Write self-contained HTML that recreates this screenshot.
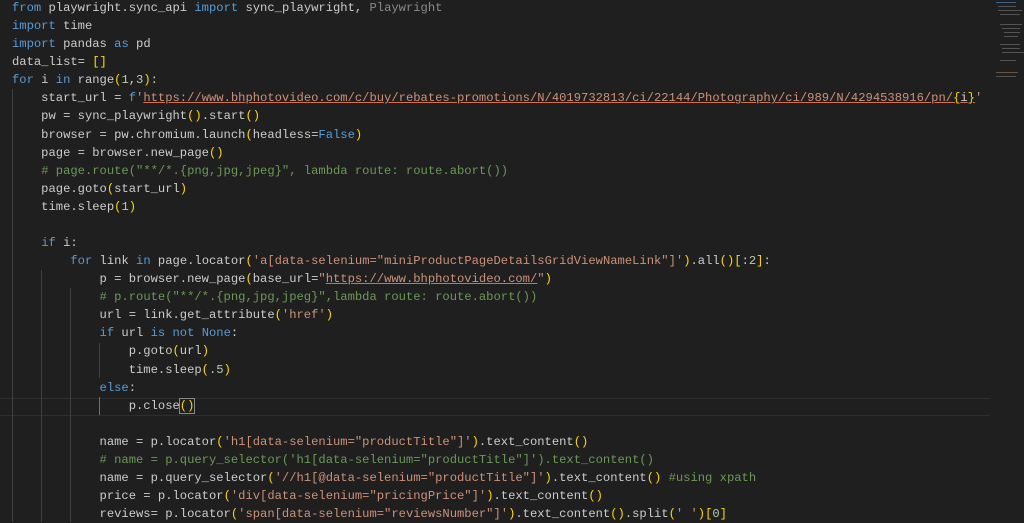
<!DOCTYPE html>
<html><head><meta charset="utf-8"><style>
html,body{margin:0;padding:0;background:#1f1f1f;width:1024px;height:522px;overflow:hidden}
#ed{position:absolute;left:12px;top:-1px;font-family:"Liberation Mono",monospace;font-size:12.17px;color:#cccccc}
.l{height:18.08px;line-height:18.08px;position:relative;white-space:pre}
.k{color:#569cd6}.c{color:#6a9955}.s{color:#ce9178}.n{color:#b5cea8}.y{color:#ffd700}.g{color:#8a8a8a}
.u{text-decoration:underline;text-decoration-color:#d4704e}
.g1{position:absolute;width:1px;background:#404040}
.cur{position:absolute;left:0;width:990px;height:16px;border-top:1px solid #2e2e2e;border-bottom:1px solid #2e2e2e}
.mm{position:absolute;background:#6a6a6a;height:1px;opacity:.7}
</style></head><body>
<div class="cur" style="top:398px"></div>
<div class="g1" style="left:12px;top:89px;height:433px"></div>
<div class="g1" style="left:41px;top:270px;height:252px"></div>
<div class="g1" style="left:70px;top:288px;height:234px"></div>
<div class="g1" style="left:99px;top:343px;height:35px"></div>
<div class="g1" style="left:99px;top:397px;height:18px;background:#707070"></div>
<div id="ed"><div class="l"><span class="k">from</span> playwright.sync_api <span class="k">import</span> sync_playwright, <span class="g">Playwright</span></div><div class="l"><span class="k">import</span> time</div><div class="l"><span class="k">import</span> pandas <span class="k">as</span> pd</div><div class="l">data_list= <span class="y">[]</span></div><div class="l"><span class="k">for</span> i <span class="k">in</span> range<span class="y">(</span><span class="n">1</span>,<span class="n">3</span><span class="y">)</span>:</div><div class="l">    start_url = <span class="k">f</span><span class="s">'<span class="u">https://www.bhphotovideo.com/c/buy/rebates-promotions/N/4019732813/ci/22144/Photography/ci/989/N/4294538916/pn/<span class="y">{</span><span style="color:#ccc">i</span><span class="y">}</span></span>'</span></div><div class="l">    pw = sync_playwright<span class="y">()</span>.start<span class="y">()</span></div><div class="l">    browser = pw.chromium.launch<span class="y">(</span>headless=<span class="k">False</span><span class="y">)</span></div><div class="l">    page = browser.new_page<span class="y">()</span></div><div class="l">    <span class="c"># page.route("**/*.{png,jpg,jpeg}", lambda route: route.abort())</span></div><div class="l">    page.goto<span class="y">(</span>start_url<span class="y">)</span></div><div class="l">    time.sleep<span class="y">(</span><span class="n">1</span><span class="y">)</span></div><div class="l"> </div><div class="l">    <span class="k">if</span> i:</div><div class="l">        <span class="k">for</span> link <span class="k">in</span> page.locator<span class="y">(</span><span class="s">'a[data-selenium="miniProductPageDetailsGridViewNameLink"]'</span><span class="y">)</span>.all<span class="y">()[</span>:<span class="n">2</span><span class="y">]</span>:</div><div class="l">            p = browser.new_page<span class="y">(</span>base_url=<span class="s">"<span class="u">https://www.bhphotovideo.com/</span>"</span><span class="y">)</span></div><div class="l">            <span class="c"># p.route("**/*.{png,jpg,jpeg}",lambda route: route.abort())</span></div><div class="l">            url = link.get_attribute<span class="y">(</span><span class="s">'href'</span><span class="y">)</span></div><div class="l">            <span class="k">if</span> url <span class="k">is</span> <span class="k">not</span> <span class="k">None</span>:</div><div class="l">                p.goto<span class="y">(</span>url<span class="y">)</span></div><div class="l">                time.sleep<span class="y">(</span><span class="n">.5</span><span class="y">)</span></div><div class="l">            <span class="k">else</span>:</div><div class="l">                p.close<span class="y" style="outline:1px solid #888">()</span></div><div class="l"> </div><div class="l">            name = p.locator<span class="y">(</span><span class="s">'h1[data-selenium="productTitle"]'</span><span class="y">)</span>.text_content<span class="y">()</span></div><div class="l">            <span class="c"># name = p.query_selector('h1[data-selenium="productTitle"]').text_content()</span></div><div class="l">            name = p.query_selector<span class="y">(</span><span class="s">'//h1[@data-selenium="productTitle"]'</span><span class="y">)</span>.text_content<span class="y">()</span> <span class="c">#using xpath</span></div><div class="l">            price = p.locator<span class="y">(</span><span class="s">'div[data-selenium="pricingPrice"]'</span><span class="y">)</span>.text_content<span class="y">()</span></div><div class="l">            reviews= p.locator<span class="y">(</span><span class="s">'span[data-selenium="reviewsNumber"]'</span><span class="y">)</span>.text_content<span class="y">()</span>.split<span class="y">(</span><span class="s">' '</span><span class="y">)[</span><span class="n">0</span><span class="y">]</span></div></div>
<div class="mm" style="left:996px;top:2px;width:20px;background:#4a7fb5"></div>
<div class="mm" style="left:998px;top:6px;width:18px"></div>
<div class="mm" style="left:998px;top:10px;width:24px"></div>
<div class="mm" style="left:1000px;top:14px;width:20px"></div>
<div class="mm" style="left:1000px;top:24px;width:22px"></div>
<div class="mm" style="left:1002px;top:28px;width:18px"></div>
<div class="mm" style="left:1004px;top:32px;width:16px"></div>
<div class="mm" style="left:1004px;top:36px;width:14px"></div>
<div class="mm" style="left:1000px;top:44px;width:20px"></div>
<div class="mm" style="left:1002px;top:48px;width:18px"></div>
<div class="mm" style="left:1002px;top:52px;width:22px"></div>
<div class="mm" style="left:1000px;top:60px;width:16px"></div>
<div class="mm" style="left:996px;top:72px;width:22px;background:#8a6a50"></div>
<div class="mm" style="left:996px;top:76px;width:20px"></div>
</body></html>
